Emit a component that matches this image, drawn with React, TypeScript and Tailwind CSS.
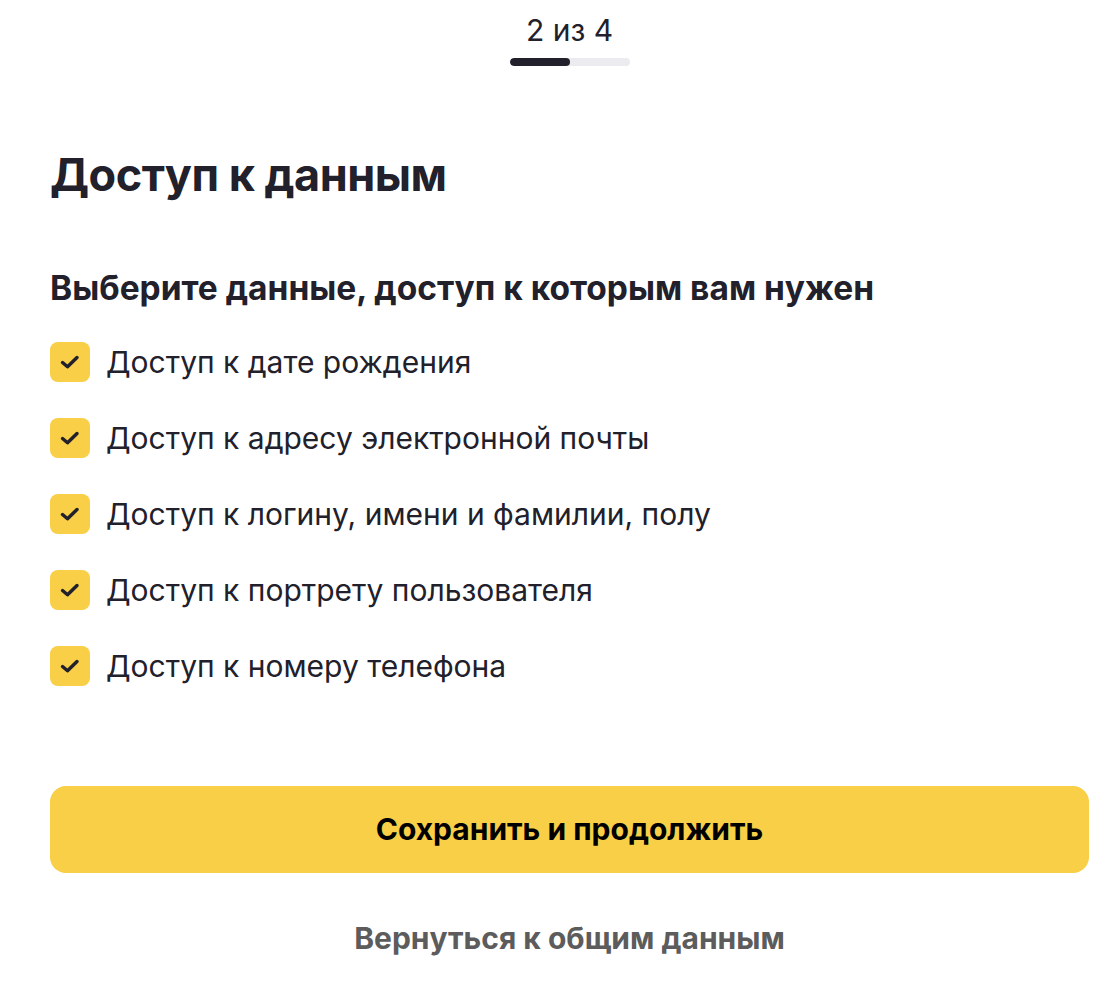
import React from "react";

const items = [
  "Доступ к дате рождения",
  "Доступ к адресу электронной почты",
  "Доступ к логину, имени и фамилии, полу",
  "Доступ к портрету пользователя",
  "Доступ к номеру телефона",
];

function Check() {
  return (
    <div className="w-10 h-10 rounded-lg bg-[#f8cf46] flex items-center justify-center shrink-0">
      <svg width="22" height="16" viewBox="0 0 22 16" fill="none">
        <path d="M3.5 8.5L8.5 12.8L18 3.5" stroke="#21202b" strokeWidth="3.4" strokeLinecap="round" strokeLinejoin="round" />
      </svg>
    </div>
  );
}

export default function App() {
  return (
    <div className="min-h-[981px] bg-white text-[#21202b] font-['Inter',sans-serif] pl-[50px] pr-[18px]">
      <div className="flex flex-col items-center pt-[12px]">
        <div className="text-[30px] leading-[36px]">2 из 4</div>
        <div className="mt-[10px] w-[120px] h-[8px] rounded-full bg-[#ebebf0] overflow-hidden">
          <div className="w-[60px] h-full rounded-full bg-[#21202b]" />
        </div>
      </div>
      <h1 className="mt-[82px] text-[45px] leading-[54px] font-bold tracking-[-0.5px]">Доступ к данным</h1>
      <h2 className="mt-[66px] text-[33.5px] leading-[40px] font-bold">Выберите данные, доступ к которым вам нужен</h2>
      <div className="mt-[34px] flex flex-col gap-[36px]">
        {items.map((t) => (
          <div key={t} className="flex items-center gap-[16px]">
            <Check />
            <span className="text-[30px] leading-[40px]">{t}</span>
          </div>
        ))}
      </div>
      <button className="mt-[100px] w-full h-[87px] rounded-2xl bg-[#f8cf46] text-black text-[30px] font-bold">
        Сохранить и продолжить
      </button>
      <div className="mt-[47px] text-center text-[#5c5c5c] text-[30px] leading-[36px] font-bold">Вернуться к общим данным</div>
    </div>
  );
}
